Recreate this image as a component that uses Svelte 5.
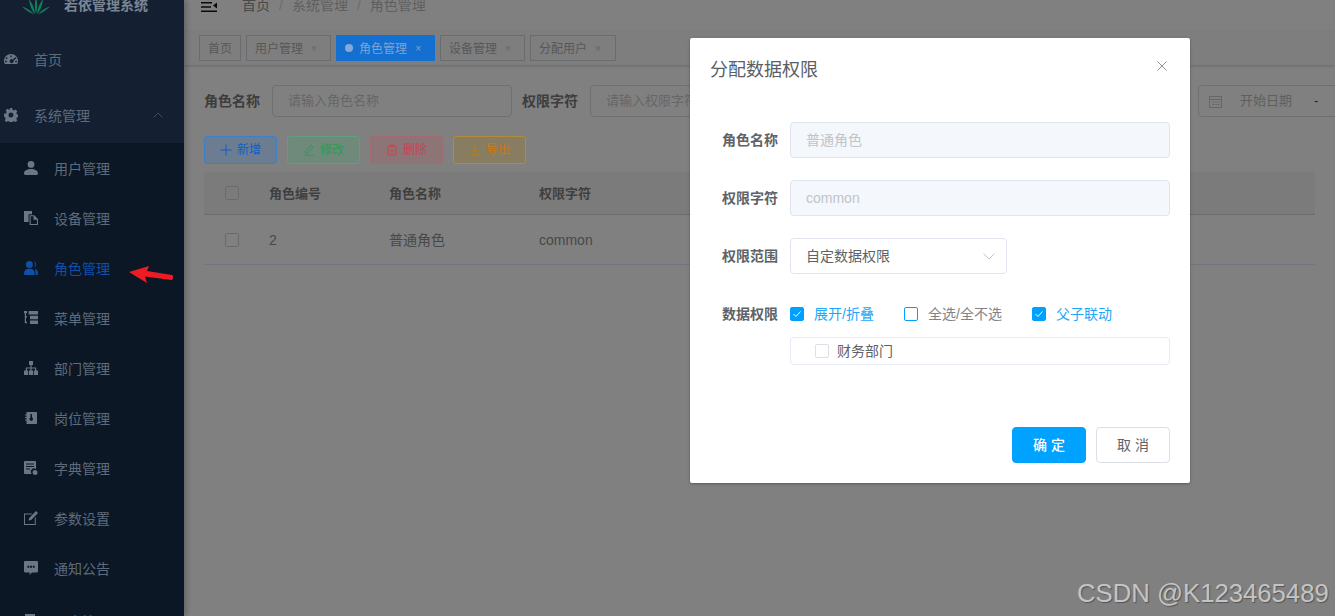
<script>
  const sub = [
    { label: '用户管理', icon: 'user' },
    { label: '设备管理', icon: 'docs' },
    { label: '角色管理', icon: 'peoples', active: true },
    { label: '菜单管理', icon: 'treetable' },
    { label: '部门管理', icon: 'tree' },
    { label: '岗位管理', icon: 'post' },
    { label: '字典管理', icon: 'dict' },
    { label: '参数设置', icon: 'edit' },
    { label: '通知公告', icon: 'message' },
    { label: '日志管理', icon: 'log', tall: true }
  ];
  const paths = {
    user: 'M7 0a3.4 3.4 0 1 1 0 6.8A3.4 3.4 0 0 1 7 0zM0 12.6C0 9.6 3 8 7 8s7 1.6 7 4.6c0 .9-.6 1.4-1.4 1.4H1.4C.6 14 0 13.500 0 12.600z',
    docs: 'M0 0h8v3.200H4.600V11H0zM5.600 4.200h4.600L14 8v6H5.600zM6.700 5.300v7.600h6.200V8.800H9.500V5.300z',
    peoples: 'M5.400 0a3.500 3.500 0 1 1 0 7 3.500 3.500 0 0 1 0-7zM0 13.200C0 9.600 2 7.800 5.400 7.800s5.400 1.800 5.400 5.400c0 .5-.3.800-.7.800H.7c-.4 0-.7-.3-.7-.8zM9.500.300a3.400 3.400 0 0 1 .5 6.500 5 5 0 0 0-.5-6.500zM11 7.800c2 .5 3 2.400 3 5.200 0 .6-.3 1-.7 1h-1.600c0-2.400-.2-4.400-.7-6.200z',
    treetable: 'M0 0h3v2.200H2V5h1v1.400H2v4.400h1v1.400H.8V2.200H0zM4.600 0H14v3.400H4.600zM6 4.800h8v3.400H6zM6 9.600h8V13H6z',
    tree: 'M5 0h4v4H7.600v2.400H12.200V9.500H14V14H9.800V9.500h1.200V7.600H7.600v1.900H9V14H5V9.500h1.400V7.600H3v1.900h1.200V14H0V9.500h1.800V6.400h4.600V4H5z',
    post: 'M2.500 1h9.500c.5 0 1 .4 1 1v10c0 .6-.5 1-1 1H2.500zM6.500 3v3.200a1.800 1.800 0 0 0-1 1.700c0 1 .8 1.800 1.800 1.800S9 9 9 7.900c0-.8-.4-1.400-1-1.700V3zM1 3.500h1.500v1H1zM1 6h1.500v1H1zM1 8.500h1.500v1H1z',
    dict: 'M1 0h10c.5 0 1 .4 1 1v7.200a3 3 0 0 0-4 4.800H1c-.5 0-1-.4-1-1V1c0-.6.5-1 1-1zM2 2.500v1h8v-1zM2 5v1h8V5zM2 7.500v1h4v-1zM11 9a2.500 2.500 0 1 1 0 5 2.500 2.500 0 0 1 0-5z',
    edit: 'M0 2.400h8.200L7.200 3.400H1V13h9.800V6.900l1-1V14H0zM12 0l2 2-6.800 6.900-2.600.6.600-2.600z',
    message: 'M1.200 0h11.600C13.500 0 14 .5 14 1.200v9.100c0 .7-.5 1.200-1.200 1.200H8L5.500 14l.3-2.500h-4.600C.5 11.500 0 11 0 10.300V1.200C0 .5.500 0 1.200 0zM3.400 4.800v1.900h1.900V4.800zM6.100 4.800v1.900H8V4.800zM8.800 4.800v1.900h1.900V4.800z',
    log: 'M1 0h10v14H1zM3 3v1h6V3zM3 6v1h6V6z'
  };
  const tags = [
    { label: '首页', closable: false },
    { label: '用户管理', closable: true },
    { label: '角色管理', closable: true, active: true },
    { label: '设备管理', closable: true },
    { label: '分配用户', closable: true }
  ];
</script>

<div class="page">
  <aside class="sidebar">
    <div class="logo">
      <svg class="plant" width="28" height="15" viewBox="0 0 28 15">
        <path d="M14 14C12.500 9 12.500 3 14-4c1.500 7 1.500 13 0 18zM13 14C9.500 10.500 7.500 5 7-1c3 4 5.500 9 6 15zM15 14c3.500-3.500 5.500-9 6-15-3 4-5.500 9-6 15zM12 14.500C8 13 3.500 10 0 6.500c4.500 1.500 9 4 12 8zM16 14.500c4-1.500 8.500-4.500 12-8-4.500 1.500-9 4-12 8z" />
      </svg>
      <span>若依管理系统</span>
    </div>
    <div class="top-item">
      <svg class="nav-icon" viewBox="0 0 14 14"><path fill-rule="evenodd" d="M7 2C3.100 2 0 5 0 8.900c0 1.200.3 2.200.8 3.100h12.400c.5-.9.800-1.900.8-3.100C14 5 10.900 2 7 2zM6.300 3.400h1.400v1.800H6.300zM2.400 5.100l1.300 1-.9 1.100-1.300-1zM11.600 5.100l.9 1.100-2.900 2.300a2 2 0 1 1-.9-1.100zM1.100 8.800h1.700v1.400H1.100zM11.200 8.800h1.700v1.400h-1.700z" /></svg>
      <span>首页</span>
    </div>
    <div class="top-item">
      <svg class="nav-icon" viewBox="0 0 14 14"><path fill-rule="evenodd" d="M5.800 0h2.400l.4 1.900 1.300.6 1.700-1 1.700 1.700-1 1.700.6 1.300 2 .4v2.400l-2 .4-.6 1.300 1 1.700-1.700 1.700-1.700-1-1.300.6-.4 1.900H5.800l-.4-1.900-1.300-.6-1.700 1-1.700-1.700 1-1.700-.6-1.300L0 8.200V5.800l2-.4.6-1.300-1-1.700 1.700-1.700 1.700 1 1.300-.6zM7 4.500a2.500 2.500 0 1 0 0 5 2.500 2.500 0 0 0 0-5z" /></svg>
      <span>系统管理</span>
      <svg class="chev" width="10" height="6" viewBox="0 0 10 6"><path d="M.5 5.500 5 1l4.500 4.500" /></svg>
    </div>
    <ul class="submenu">
      {#each sub as item}
        <li class:active={item.active} class:tall={item.tall}>
          <svg class="nav-icon" viewBox="0 0 14 14"><path fill-rule="evenodd" d={paths[item.icon]} /></svg>
          <span>{item.label}</span>
        </li>
      {/each}
    </ul>
  </aside>

  <main class="main">
    <header class="navbar">
      <svg class="hamburger" width="16" height="10" viewBox="0 0 16 10"><path d="M0 0h11v1.600H0zM0 4.200h10v1.600H0zM0 8.400h16V10H0zM16 .5v6l-4-3z" /></svg>
      <nav class="crumbs">
        <span class="crumb-first">首页</span><i>/</i><span>系统管理</span><i>/</i><span>角色管理</span>
      </nav>
    </header>

    <div class="tags">
      {#each tags as t}
        <span class="tag" class:active={t.active}>
          {#if t.active}<b class="dot"></b>{/if}
          <span>{t.label}</span>
          {#if t.closable}<em>×</em>{/if}
        </span>
      {/each}
    </div>

    <section class="content">
      <form class="search">
        <label>角色名称</label>
        <div class="field">请输入角色名称</div>
        <label>权限字符</label>
        <div class="field">请输入权限字符</div>
        <label>状态</label>
        <div class="field">角色状态</div>
        <label>创建时间</label>
        <div class="field date">
          <svg width="13" height="13" viewBox="0 0 13 13"><path fill-rule="evenodd" d="M0 1h13v12H0zM1 2v2h11V2zM1 5v7h11V5zM3 6.500h2v1H3zM5.800 6.500h2v1h-2zM8.600 6.500h2v1h-2zM3 9h2v1H3zM5.800 9h2v1h-2zM8.600 9h2v1h-2z" /></svg>
          <span class="start">开始日期</span>
          <span class="sep">-</span>
        </div>
      </form>

      <div class="actions">
        <button type="button" class="btn blue">
          <svg width="12" height="12" viewBox="0 0 12 12"><path d="M6 .5v11M.5 6h11" /></svg>新增
        </button>
        <button type="button" class="btn green">
          <svg width="12" height="12" viewBox="0 0 12 12"><path d="M8 1l2 2-5.500 6H2.500V7zM1 11.200h10" /></svg>修改
        </button>
        <button type="button" class="btn red">
          <svg width="12" height="12" viewBox="0 0 12 12"><path d="M1 2.800h10M4 2.800V1h4v1.800M2 2.800V11h8V2.800M5 5v3.500M7 5v3.500" /></svg>删除
        </button>
        <button type="button" class="btn amber">
          <svg width="12" height="12" viewBox="0 0 12 12"><path d="M6 1v6.500M3.200 5 6 7.800 8.800 5M1.500 10.800h9" /></svg>导出
        </button>
      </div>

      <div class="table">
        <div class="row head">
          <div class="cell check"><span class="box"></span></div>
          <div class="cell c1">角色编号</div>
          <div class="cell c2">角色名称</div>
          <div class="cell c3">权限字符</div>
        </div>
        <div class="row">
          <div class="cell check"><span class="box"></span></div>
          <div class="cell c1 num">2</div>
          <div class="cell c2 cjk">普通角色</div>
          <div class="cell c3 num">common</div>
        </div>
      </div>
    </section>
  </main>

  <svg class="arrow" width="46" height="20" viewBox="0 0 46 20"><path d="M0 7 20 1 18 6 43 10c1.500.3 1.500 5-.5 5L16 11.500 18 18z" /></svg>

  <div class="dialog">
    <div class="dlg-head">
      <span>分配数据权限</span>
      <svg width="10" height="10" viewBox="0 0 10 10"><path d="M.5.500l9 9M9.500.500l-9 9" /></svg>
    </div>
    <div class="dlg-body">
      <div class="form-row">
        <span class="flabel">角色名称</span>
        <div class="finput disabled">普通角色</div>
      </div>
      <div class="form-row">
        <span class="flabel">权限字符</span>
        <div class="finput disabled">common</div>
      </div>
      <div class="form-row">
        <span class="flabel">权限范围</span>
        <div class="finput select">
          <span>自定数据权限</span>
          <svg width="12" height="7" viewBox="0 0 12 7"><path d="M.5.500 6 6 11.500.500" /></svg>
        </div>
      </div>
      <div class="form-row scope">
        <span class="flabel">数据权限</span>
        <div class="scope-col">
          <div class="checks">
            <span class="chk on one"><i><svg width="10" height="8" viewBox="0 0 10 8"><path d="M1.500 4 4 6.500 8.500 1.500" /></svg></i><span>展开/折叠</span></span>
            <span class="chk two"><i></i><span>全选/全不选</span></span>
            <span class="chk on"><i><svg width="10" height="8" viewBox="0 0 10 8"><path d="M1.500 4 4 6.500 8.500 1.500" /></svg></i><span>父子联动</span></span>
          </div>
          <div class="tree"><span class="box"></span><span class="tree-label">财务部门</span></div>
        </div>
      </div>
    </div>
    <div class="dlg-foot">
      <button type="button" class="dbtn primary">确 定</button>
      <button type="button" class="dbtn">取 消</button>
    </div>
  </div>

  <div class="watermark">CSDN @K123465489</div>
</div>

<style>
  :global(body) {
    margin: 0;
    overflow: hidden;
    background: #808080;
  }
  .page {
    display: flex;
    width: 1335px;
    height: 616px;
    overflow: hidden;
    position: relative;
    font-family: "Liberation Sans", "Noto Sans CJK SC", sans-serif;
    font-size: 14px;
  }
  svg { display: block; flex: none; }

  /* sidebar */
  .sidebar {
    width: 184px;
    flex: none;
    background: #0c1725;
    color: #5e6b7c;
    box-shadow: 2px 0 6px rgba(0, 0, 0, .25);
    z-index: 1;
  }
  .logo {
    height: 31px;
    background: #142032;
    display: flex;
    align-items: flex-start;
    gap: 14px;
    padding-left: 22px;
    line-height: 10px;
    font-weight: 700;
    color: #7b8694;
  }
  .plant path { fill: #0f7f5c; }
  .top-item {
    height: 56px;
    background: #142032;
    display: flex;
    align-items: center;
    padding-left: 4px;
    gap: 16px;
    position: relative;
  }
  .nav-icon { width: 14px; height: 14px; fill: #6c7684; }
  .chev { position: absolute; left: 153px; top: 25px; fill: none; stroke: #3e4b5d; }
  .submenu { list-style: none; margin: 0; padding: 0; }
  .submenu li {
    height: 50px;
    display: flex;
    align-items: center;
    gap: 16px;
    padding-left: 24px;
  }
  .submenu li.tall { height: 56px; }
  .submenu li.active { color: #0f50a8; }
  .submenu li.active .nav-icon { fill: #0f50a8; }

  /* main */
  .main { flex: 1; min-width: 0; background: #808080; }
  .navbar {
    height: 31px;
    display: flex;
    align-items: flex-start;
    line-height: 10px;
    padding-left: 17px;
  }
  .hamburger { margin-top: 2px; fill: #0a0a0a; }
  .crumbs { margin-left: 25px; color: #5f5f5f; white-space: nowrap; }
  .crumb-first { color: #484848; }
  .crumbs i { font-style: normal; margin: 0 9px; color: #6c6c6c; }
  .tags {
    height: 34px;
    box-sizing: border-box;
    display: flex;
    align-items: center;
    gap: 5px;
    padding-left: 15px;
    background: #7e7e7e;
    box-shadow: 0 1px 3px rgba(0, 0, 0, .18);
    position: relative;
  }
  .tag {
    height: 26px;
    box-sizing: border-box;
    border: 1px solid #6b6c70;
    display: flex;
    align-items: center;
    padding: 0 8px 2px;
    font-size: 12px;
    color: #575757;
    white-space: nowrap;
  }
  .tag:last-child { padding-right: 9px; }
  .tag em {
    font-style: normal;
    font-size: 10px;
    margin: 2px 2px 0 5px;
    width: 12px;
    text-align: center;
    color: #666;
  }
  .tag.active { background: #1470d0; border-color: #1470d0; color: #7fa3d4; }
  .tag.active em { color: #7fa3d4; }
  .dot { width: 8px; height: 8px; border-radius: 50%; background: #86a8d4; margin: 2px 6px 0 0; }

  .content { padding: 20px 20px 0; }
  .search { display: flex; align-items: center; height: 32px; white-space: nowrap; }
  .search label { font-weight: 700; color: #3d3d3d; margin-right: 12px; flex: none; padding-bottom: 2px; }
  .field {
    width: 240px;
    height: 32px;
    flex: none;
    box-sizing: border-box;
    border: 1px solid #6e6f72;
    border-radius: 4px;
    padding: 0 15px;
    margin-right: 10px;
    line-height: 30px;
    font-size: 13px;
    color: #666;
  }
  .date { display: flex; align-items: center; padding: 0 10px; }
  .date svg { fill: #666; }
  .start { margin-left: 18px; width: 52px; color: #5f5f5f; }
  .sep { margin-left: 22px; color: #222; }

  .actions { display: flex; gap: 10px; margin-top: 19px; }
  .btn {
    width: 73px;
    height: 28px;
    box-sizing: border-box;
    border: 1px solid;
    border-radius: 3px;
    display: flex;
    align-items: center;
    justify-content: center;
    gap: 5px;
    padding: 0 0 3px;
    font: 12px "Liberation Sans", "Noto Sans CJK SC", sans-serif;
  }
  .btn svg { fill: none; stroke: currentColor; margin-top: 2px; }
  .blue { background: #6d7d91; border-color: #3f7fc8; color: #0f5fc4; }
  .green { background: #6f8a7b; border-color: #649c7e; color: #2e9a55; }
  .red { background: #8d7477; border-color: #a06c70; color: #c6444e; }
  .amber { background: #887d60; border-color: #ae8c3c; color: #c47c0c; }

  .table { margin-top: 8px; color: #3f3f3f; }
  .row { display: flex; height: 49px; align-items: center; border-bottom: 1px solid #74747e; }
  .row.head { height: 42px; background: #7b7b7b; font-size: 13px; font-weight: 700; border-bottom-color: #6b6b6b; }
  .row.head .c1, .row.head .c2, .row.head .c3 { padding-bottom: 1px; }
  .cell { flex: none; padding-left: 10px; box-sizing: border-box; }
  .check { width: 55px; padding-left: 21px; display: flex; }
  .c1 { width: 120px; }
  .c2 { width: 150px; }
  .num, .cjk { color: #484848; }
  .cjk { padding-bottom: 2px; }
  .box {
    width: 14px;
    height: 14px;
    box-sizing: border-box;
    display: block;
    border: 1px solid #6a6b70;
    border-radius: 2px;
  }

  .arrow { position: absolute; left: 129px; top: 265px; fill: #ed1c24; z-index: 2; }

  /* dialog */
  .dialog {
    position: absolute;
    left: 690px;
    top: 38px;
    width: 500px;
    height: 445px;
    background: #fff;
    border-radius: 2px;
    box-shadow: 0 1px 3px rgba(0, 0, 0, .3);
    color: #606266;
    z-index: 3;
    display: flex;
    flex-direction: column;
  }
  .dlg-head {
    height: 84px;
    box-sizing: border-box;
    padding: 20px 23px 0 20px;
    display: flex;
    justify-content: space-between;
    font-size: 18px;
    line-height: 22px;
    color: #5a5e66;
  }
  .dlg-head span { margin-top: 1px; }
  .dlg-head svg { margin-top: 3px; fill: none; stroke: #909399; }
  .dlg-body { padding: 0 20px; }
  .form-row { display: flex; align-items: center; margin-bottom: 22px; }
  .flabel { width: 68px; margin-right: 12px; padding-bottom: 2px; text-align: right; font-weight: 700; flex: none; }
  .finput {
    flex: 1;
    height: 36px;
    box-sizing: border-box;
    border: 1px solid #dfe4ed;
    border-radius: 4px;
    padding: 0 15px;
    line-height: 34px;
  }
  .disabled { background: #f4f7fb; color: #c0c4cc; }
  .select {
    flex: none;
    width: 217px;
    display: flex;
    justify-content: space-between;
    align-items: center;
    color: #606266;
    padding-right: 11px;
  }
  .select svg { fill: none; stroke: #c0c4cc; }
  .scope { align-items: flex-start; }
  .scope .flabel { line-height: 36px; padding-bottom: 0; }
  .scope-col { flex: 1; }
  .checks { height: 36px; display: flex; align-items: center; }
  .chk { display: flex; align-items: center; gap: 10px; color: #808489; white-space: nowrap; }
  .chk > span { padding-bottom: 2px; }
  .chk i {
    width: 14px;
    height: 14px;
    box-sizing: border-box;
    border: 1px solid #00a0ff;
    border-radius: 2px;
    display: flex;
    align-items: center;
    justify-content: center;
  }
  .chk.on { color: #20a8f8; }
  .chk.on i { background: #00a0ff; }
  .chk i svg { fill: none; stroke: #fff; }
  .one { width: 114px; }
  .two { width: 128px; }
  .tree {
    margin-top: 5px;
    height: 28px;
    box-sizing: border-box;
    border: 1px solid #e6ebf5;
    border-radius: 4px;
    display: flex;
    align-items: center;
    gap: 8px;
    padding-left: 24px;
    color: #606266;
  }
  .tree-label { padding-bottom: 2px; }
  .tree .box { border-color: #dcdfe6; }
  .dlg-foot {
    margin-top: 40px;
    padding-right: 20px;
    display: flex;
    justify-content: flex-end;
    gap: 10px;
  }
  .dbtn {
    width: 74px;
    height: 36px;
    box-sizing: border-box;
    border: 1px solid #dcdfe6;
    border-radius: 4px;
    background: #fff;
    color: #606266;
    font: 14px "Liberation Sans", "Noto Sans CJK SC", sans-serif;
    padding: 0 0 2px;
  }
  .dbtn.primary { background: #00a2ff; border-color: #00a2ff; color: #fff; font-weight: 500; }

  .watermark {
    position: absolute;
    left: 1077px;
    top: 579px;
    font-size: 25.7px;
    line-height: 28px;
    color: #c4c4c4;
    text-shadow: 1px 1px 1px #555;
    white-space: nowrap;
    z-index: 4;
  }
</style>
